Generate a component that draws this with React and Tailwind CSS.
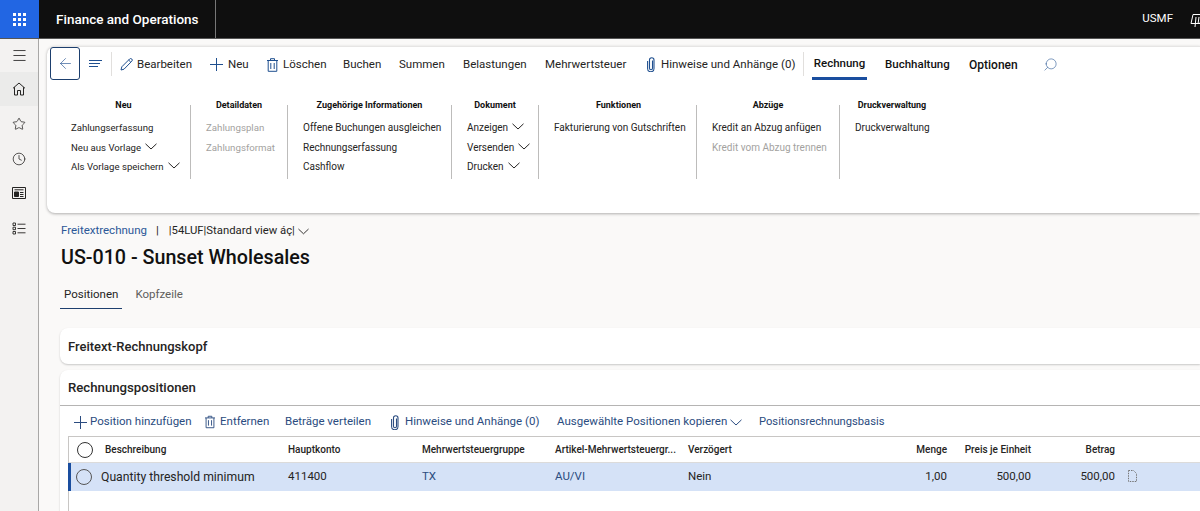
import { Menu, Star, Clock, Search, ArrowLeft } from "lucide-react";

const font = { fontFamily: 'Roboto, "Noto Sans", sans-serif' };

const groups = [
  { title: "Neu", box: "w-[144px] pl-[24px] pr-[14px]", size: "text-[9.6px]", items: [["Zahlungserfassung"], ["Neu aus Vorlage", "chev"], ["Als Vorlage speichern", "chev"]] },
  { title: "Detaildaten", box: "w-[97px] px-[15px]", size: "text-[9.7px]", items: [["Zahlungsplan", "off"], ["Zahlungsformat", "off"]] },
  { title: "Zugehörige Informationen", box: "w-[164px] px-[15px]", size: "text-[10px]", items: [["Offene Buchungen ausgleichen"], ["Rechnungserfassung"], ["Cashflow"]] },
  { title: "Dokument", box: "w-[87px] px-[15px]", size: "text-[10px]", items: [["Anzeigen", "chev"], ["Versenden", "chev"], ["Drucken", "chev"]] },
  { title: "Funktionen", box: "w-[158px] pl-[15px] pr-[13px]", size: "text-[10px]", items: [["Fakturierung von Gutschriften"]] },
  { title: "Abzüge", box: "w-[143px] px-[15px]", size: "text-[10px]", items: [["Kredit an Abzug anfügen"], ["Kredit vom Abzug trennen", "off"]] },
  { title: "Druckverwaltung", box: "w-[105px] pl-[15px] pr-[16px]", size: "text-[10px]", items: [["Druckverwaltung"]], last: true },
];

function Chev({ className = "" }) {
  return (
    <svg className={`shrink-0 ${className}`} width="12" height="7" viewBox="0 0 12 7" fill="none" stroke="currentColor" strokeWidth="1">
      <path d="M.5 .8 6 6 11.5 .8" />
    </svg>
  );
}

function Cross({ className = "" }) {
  return (
    <svg className={`shrink-0 ${className}`} width="13" height="13" viewBox="0 0 13 13" fill="none" stroke="currentColor" strokeWidth="1">
      <path d="M6.5 0v13M0 6.5h13" />
    </svg>
  );
}

function Trash({ className = "" }) {
  return (
    <svg className={`shrink-0 ${className}`} width="11" height="14" viewBox="0 0 11 14" fill="none" stroke="currentColor" strokeWidth="1">
      <path d="M0 2.5h11M3.5 2.5V.7h4v1.8M1.2 2.5v10.8h8.6V2.5M3.8 5v6M7.2 5v6" />
    </svg>
  );
}

function Clip({ className = "" }) {
  return (
    <svg className={`shrink-0 ${className}`} width="8" height="15" viewBox="0 0 8 15" fill="none" stroke="currentColor" strokeWidth="1.1">
      <path d="M5.5 3.5v7.7a1.5 1.5 0 0 1-3 0V3a2 2 0 0 1 4.5 0v8.5a3.2 3.2 0 0 1-6.4 0V4" />
    </svg>
  );
}

function Pen({ className = "" }) {
  return (
    <svg className={`shrink-0 ${className}`} width="13" height="13" viewBox="0 0 13 13" fill="none" stroke="currentColor" strokeWidth="1">
      <path d="M1 12l.8-3.2L9.6 1a1.4 1.4 0 0 1 2.2 2.2L4 11.2zM8.6 2l2.2 2.2" />
    </svg>
  );
}

function Group({ g }) {
  return (
    <div className={`${g.box} h-[74px] shrink-0 ${g.last ? "" : "border-r border-[#bdbcbb]"}`}>
      <div className="-mt-[7px] h-[14px] text-[9px] leading-[14px] font-bold text-[#111] whitespace-nowrap text-center">{g.title}</div>
      <div className="mt-[9px] flex flex-col gap-[5.5px]">
        {g.items.map(([label, kind]) => (
          <div key={label} className={`flex items-center gap-[4px] h-[14px] ${g.size} leading-[14px] whitespace-nowrap ${kind === "off" ? "text-[#a3a2a0]" : "text-[#252423]"}`}>
            {label}
            {kind === "chev" && <Chev className="text-[#252423] -mt-[3px]" />}
          </div>
        ))}
      </div>
    </div>
  );
}

function Cmd({ icon, children, className = "" }) {
  return (
    <div className={`flex items-center shrink-0 pt-[2px] text-[11.5px] text-[#252423] whitespace-nowrap ${className}`}>
      {icon}
      {children}
    </div>
  );
}

function Circle({ className = "" }) {
  return <div className={`w-[16px] h-[16px] rounded-full border shrink-0 ${className}`} />;
}

export default function App() {
  return (
    <div style={font} className="w-[1200px] h-[511px] overflow-hidden bg-[#faf9f8] flex flex-col">
      {/* top bar */}
      <header className="h-[39px] shrink-0 bg-[#0f0f0f] flex items-center border-b border-[#555] relative">
        <div className="w-[39px] h-full bg-[#2266e3] flex items-center justify-center">
          <div className="grid grid-cols-3 gap-[2px]">
            {[...Array(9)].map((_, i) => <div key={i} className="w-[3px] h-[3px] bg-white" />)}
          </div>
        </div>
        <div className="ml-[17px] w-[159px] text-white text-[13.5px] font-medium whitespace-nowrap">Finance and Operations</div>
        <div className="w-px h-full bg-[#777]" />
        <div className="ml-auto mr-[27px] text-white text-[11.5px]">USMF</div>
        <svg className="absolute left-[1190px] top-[13px]" width="14" height="15" viewBox="0 0 14 15" fill="none" stroke="white" strokeWidth="1">
          <path d="M3 1.5h9l-2 9H1zM6 4l-1 10M9 4l-1 7" />
        </svg>
      </header>

      <div className="flex flex-1 min-h-0">
        {/* rail */}
        <aside className="w-[39px] shrink-0 bg-[#f3f2f1] border-r border-[#a8a7a6] flex flex-col items-center text-[#252423]">
          <div className="h-[33px] flex items-center justify-center"><Menu size={17} strokeWidth={1.2} /></div>
          <div className="h-[34px] w-full bg-[#ebebea] flex items-center justify-center">
            <svg width="14" height="14" viewBox="0 0 14 14" fill="none" stroke="currentColor" strokeWidth="1">
              <path d="M1 6.3 7 1l6 5.3M2.5 5.2V13h3V8.5h3V13h3V5.2" />
            </svg>
          </div>
          <div className="h-[35px] flex items-center justify-center"><Star size={14} strokeWidth={1.3} /></div>
          <div className="h-[35px] flex items-center justify-center"><Clock size={14} strokeWidth={1.3} /></div>
          <div className="h-[34px] flex items-center justify-center">
            <svg width="14" height="12" viewBox="0 0 14 12" fill="none" stroke="currentColor" strokeWidth="1">
              <path d="M.5 .5h13v11H.5zM2.5 2.8h9" />
              <path d="M2.5 5h4v4.5h-4z" fill="currentColor" />
              <path d="M8 5.5h3.5M8 7.5h3.5M8 9.5h3.5" />
            </svg>
          </div>
          <div className="h-[36px] flex items-center justify-center">
            <svg width="14" height="13" viewBox="0 0 14 13" fill="none" stroke="currentColor" strokeWidth="0.9">
              <path d="M1 1h2.5v2.5H1zM1 5.2h2.5v2.5H1zM1 9.5h2.5V12H1zM5.5 2.2h8M5.5 6.5h8M5.5 10.8h8" />
            </svg>
          </div>
        </aside>

        <main className="flex-1 min-w-0">
          {/* action pane */}
          <section className="ml-[8px] mt-[7px] h-[167px] bg-white rounded-l-[8px] border-t border-[#e6e5e4] shadow-[0_1px_3px_rgba(0,0,0,0.3)]">
            <div className="flex items-center h-[33px]">
              <div className="ml-[3px] w-[30px] h-[33px] shrink-0 rounded-[3px] border border-[#1d3f6e] flex items-center justify-center">
                <ArrowLeft size={17} strokeWidth={0.9} className="text-[#1f4f8f]" />
              </div>
              <div className="ml-[9px] w-[13px] flex flex-col gap-[2px] shrink-0">
                <div className="h-px w-[13px] bg-[#1f4f8f]" />
                <div className="h-px w-[11px] bg-[#1f4f8f]" />
                <div className="h-px w-[9px] bg-[#1f4f8f]" />
              </div>
              <div className="ml-[9px] w-px h-[24px] bg-[#e1dfdd]" />
              <Cmd className="ml-[8px] w-[90px] gap-[4px]" icon={<Pen className="text-[#1f4f8f]" />}>Bearbeiten</Cmd>
              <Cmd className="w-[57px] gap-[5px]" icon={<Cross className="text-[#1f4f8f]" />}>Neu</Cmd>
              <Cmd className="w-[76px] gap-[5px]" icon={<Trash className="text-[#1f4f8f]" />}>Löschen</Cmd>
              <Cmd className="w-[56px]">Buchen</Cmd>
              <Cmd className="w-[64px]">Summen</Cmd>
              <Cmd className="w-[82px]">Belastungen</Cmd>
              <Cmd className="w-[102px]">Mehrwertsteuer</Cmd>
              <Cmd className="w-[156px] gap-[6px]" icon={<Clip className="text-[#1f4f8f]" />}>Hinweise und Anhänge (0)</Cmd>
              <div className="w-px h-[24px] bg-[#e1dfdd]" />
              <div className="ml-[8px] w-[55px] h-[33px] pt-[3px] flex items-center justify-center border-b-[3px] border-[#1a4e9f] text-[11.5px] font-medium text-[#111] shrink-0">Rechnung</div>
              <div className="ml-[18px] w-[84px] pt-[2px] text-[11.5px] font-medium text-[#111]">Buchhaltung</div>
              <div className="w-[74px] pt-[2px] text-[12px] font-medium text-[#111]">Optionen</div>
              <Search size={15} strokeWidth={0.9} className="mt-[2px] text-[#1f4f8f] -scale-x-100" />
            </div>
            <div className="flex mt-[25px]">
              {groups.map((g) => <Group key={g.title} g={g} />)}
            </div>
          </section>

          {/* page head */}
          <div className="ml-[22px] mt-[10px] flex items-center h-[16px] text-[11.5px] text-[#252423] whitespace-nowrap">
            <span className="text-[#2b5797]">Freitextrechnung</span>
            <span className="ml-[9px]">|</span>
            <span className="ml-[10px] text-[11.3px]">|54LUF|Standard view áç|</span>
            <Chev className="ml-[3px] w-[11px]" />
          </div>
          <h1 className="ml-[22px] mt-[5px] h-[28px] text-[19.7px] leading-[28px] font-medium text-[#111]">US-010 - Sunset Wholesales</h1>
          <div className="ml-[21px] mt-[12px] flex text-[11.5px] h-[25px]">
            <div className="px-[4px] border-b border-[#1d3f6e] text-[#252423] leading-[20px]">Positionen</div>
            <div className="ml-[13px] text-[#605e5c] leading-[20px]">Kopfzeile</div>
          </div>

          {/* header card */}
          <section className="ml-[21px] mt-[19px] h-[36px] bg-white rounded-l-[8px] shadow-[0_1px_2px_rgba(0,0,0,0.2)] flex items-center pl-[8px] pt-[1px] text-[13px] font-medium text-[#252423]">
            Freitext-Rechnungskopf
          </section>

          {/* lines card */}
          <section className="ml-[21px] mt-[6px] bg-white rounded-tl-[8px] shadow-[0_1px_2px_rgba(0,0,0,0.2)]">
            <div className="h-[36px] flex items-center pl-[8px] text-[13.2px] font-medium text-[#252423] border-b border-[#b5b4b3]">Rechnungspositionen</div>
            <div className="h-[30px] pt-[2px] flex items-center text-[11.5px] text-[#2b4c80] whitespace-nowrap">
              <div className="ml-[14px] w-[131px] flex items-center gap-[3px] shrink-0"><Cross />Position hinzufügen</div>
              <div className="w-[80px] flex items-center gap-[5px] shrink-0"><Trash className="w-[10px]" />Entfernen</div>
              <div className="w-[106px] shrink-0">Beträge verteilen</div>
              <div className="w-[166px] flex items-center gap-[6px] shrink-0"><Clip />Hinweise und Anhänge (0)</div>
              <div className="w-[202px] flex items-center justify-between pr-[17px] shrink-0">Ausgewählte Positionen kopieren<Chev /></div>
              <div className="text-[11.2px]">Positionsrechnungsbasis</div>
            </div>
            <div className="ml-[8px] border-l border-t border-[#c8c6c4] h-[90px]">
              <div className="grid grid-cols-[36px_183px_134px_133px_133px_170px_89px_84px_84px] items-center h-[26px] border-b border-[#dcdbda] text-[10px] font-medium text-[#252423] whitespace-nowrap">
                <div className="pl-[8px]"><Circle className="border-[#333]" /></div>
                <div>Beschreibung</div>
                <div>Hauptkonto</div>
                <div>Mehrwertsteuergruppe</div>
                <div>Artikel-Mehrwertsteuergr...</div>
                <div>Verzögert</div>
                <div className="text-right">Menge</div>
                <div className="text-right">Preis je Einheit</div>
                <div className="text-right">Betrag</div>
              </div>
              <div className="grid grid-cols-[33px_184px_134px_133px_133px_170px_89px_84px_84px_auto] items-center h-[28px] bg-[#d5e2f7] border-l-[3px] border-[#1a4e9f] -ml-px text-[11.5px] text-[#252423] whitespace-nowrap">
                <div className="pl-[5px]"><Circle className="border-[#555]" /></div>
                <div className="-ml-[3px] text-[12.2px]">Quantity threshold minimum</div>
                <div>411400</div>
                <div className="text-[#2b4c80]">TX</div>
                <div className="text-[#2b4c80]">AU/VI</div>
                <div>Nein</div>
                <div className="text-right">1,00</div>
                <div className="text-right">500,00</div>
                <div className="text-right">500,00</div>
                <svg className="ml-[12px] -mt-[2px]" width="11" height="12" viewBox="0 0 11 12" fill="none" stroke="#777" strokeWidth="1" strokeDasharray="1.5 1">
                  <path d="M1.5 .5h5l3 3v8h-8z" />
                </svg>
              </div>
            </div>
          </section>
        </main>
      </div>
    </div>
  );
}
